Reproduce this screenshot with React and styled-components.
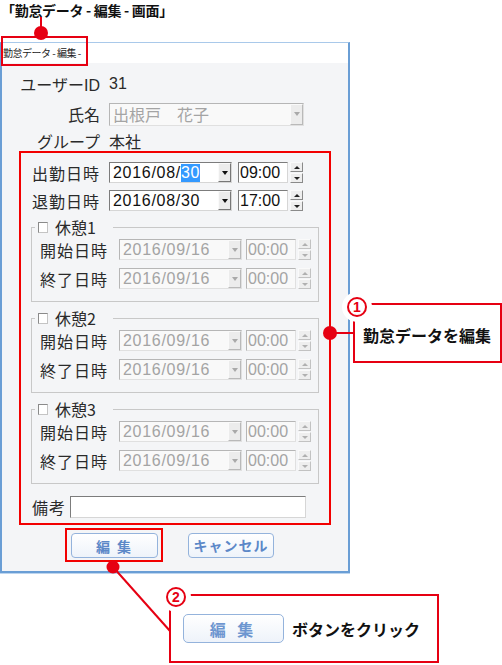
import React from 'react';
import styled, { createGlobalStyle } from 'styled-components';

const RED = '#e60012';
const BOX_RED = '#f20000';

const GlobalStyle = createGlobalStyle`
  html, body { margin: 0; padding: 0; background: #fff; }
  body {
    font-family: "Liberation Sans", "Noto Sans CJK JP", sans-serif;
    color: #222;
  }
`;

const Page = styled.div`
  position: relative;
  width: 502px;
  height: 665px;
  overflow: hidden;
  background: #fff;
`;

const Heading = styled.h1`
  margin: 0;
  padding-left: 1px;
  height: 20px;
  line-height: 20px;
  font-family: "Noto Sans CJK JP", sans-serif;
  font-size: 14px;
  font-weight: 700;
  letter-spacing: -0.3px;
  color: #111;
  white-space: nowrap;
`;

const Window = styled.div`
  margin-top: 22px;
  width: 346px;
  border: 2px solid #6a9ed5;
  border-top: 1px solid #a9c9ea;
  box-shadow: 0 1px 0 #bcd5ef;
`;

const TitleBar = styled.div`
  height: 20px;
  line-height: 20px;
  background: #fff;
  padding-left: 1px;
  font-family: "Noto Sans CJK JP", sans-serif;
  font-size: 10px;
  letter-spacing: -0.5px;
  color: #222;
  white-space: nowrap;
`;

const Body = styled.div`
  box-sizing: border-box;
  height: 508px;
  background: #f4f5f7;
  padding: 9px 0 0 17px;
  display: flex;
  flex-direction: column;
  align-items: flex-start;
`;

const InfoRow = styled.div`
  display: grid;
  grid-template-columns: 81px auto;
  column-gap: 9px;
  align-items: center;
  height: ${p => p.$h}px;
  margin-top: ${p => p.$mt || 0}px;
  font-size: 16px;
`;

const InfoLabel = styled.span`
  text-align: right;
  white-space: nowrap;
  color: #2a2a2a;
`;

const InfoValue = styled.span`
  white-space: nowrap;
  color: #2a2a2a;
`;

const Highlight = styled.section`
  box-sizing: border-box;
  width: 312px;
  margin-top: 2px;
  border: 2px solid ${BOX_RED};
  padding: 9px 0 5px 10px;
  display: flex;
  flex-direction: column;
  align-items: flex-start;
`;

const FormRow = styled.div`
  display: flex;
  align-items: center;
  height: ${p => p.$h || 21}px;
  margin-top: ${p => p.$mt || 0}px;
  padding-left: ${p => p.$pl ?? 1}px;
`;

const RowLabel = styled.span`
  width: ${p => p.$w}px;
  flex: none;
  font-family: "Noto Sans CJK JP", sans-serif;
  font-size: 16px;
  letter-spacing: 1px;
  color: #2a2a2a;
  white-space: nowrap;
`;

const Fields = styled.div`
  display: flex;
  align-items: center;
  gap: ${p => p.$gap}px;
`;

const Field = styled.div`
  display: flex;
  align-items: stretch;
  box-sizing: border-box;
  width: ${p => p.$w}px;
  height: ${p => p.$h || 21}px;
  border: 1px solid;
  border-color: ${p => (p.$disabled ? '#b6b6b6 #e0e0e0 #e0e0e0 #b6b6b6' : '#7c7c7c #d6d6d6 #d6d6d6 #7c7c7c')};
  background: ${p => (p.$disabled ? '#f9f9f9' : '#fff')};
  color: ${p => (p.$disabled ? '#a4a4a4' : '#111')};
  font-size: 16px;
  padding-left: ${p => p.$pl ?? 3}px;
  white-space: nowrap;
  overflow: hidden;
`;

const FieldText = styled.span`
  flex: 1;
  display: flex;
  align-items: center;
  letter-spacing: ${p => p.$ls || 0}px;
  font-family: ${p => (p.$cjk ? '"Noto Sans CJK JP", sans-serif' : '"Liberation Sans", sans-serif')};
`;

const Selected = styled.span`
  background: #3399ff;
  color: #fff;
`;

const DropButton = styled.span`
  flex: none;
  width: 13px;
  box-sizing: border-box;
  display: flex;
  align-items: center;
  justify-content: center;
  background: #ececec;
  border: 1px solid;
  border-color: ${p => (p.$disabled ? '#fafafa #b9b9b9 #b9b9b9 #fafafa' : '#fafafa #777 #777 #fafafa')};
  &::after {
    content: '';
    border-left: 3px solid transparent;
    border-right: 3px solid transparent;
    border-top: 4px solid ${p => (p.$disabled ? '#a9a9a9' : '#111')};
  }
`;

const TimeBox = styled.div`
  display: flex;
  align-items: center;
  gap: 2px;
`;

const Spinner = styled.div`
  display: flex;
  flex-direction: column;
  gap: 1px;
  width: 13px;
  height: 21px;
`;

const SpinButton = styled.span`
  flex: 1;
  box-sizing: border-box;
  display: flex;
  align-items: center;
  justify-content: center;
  background: #eeeeee;
  border: 1px solid;
  border-color: ${p => (p.$disabled ? '#fafafa #c2c2c2 #c2c2c2 #fafafa' : '#fafafa #8a8a8a #8a8a8a #fafafa')};
  &::after {
    content: '';
    border-left: 3px solid transparent;
    border-right: 3px solid transparent;
    ${p => (p.$up ? 'border-bottom' : 'border-top')}: 3px solid ${p => (p.$disabled ? '#b0b0b0' : '#222')};
  }
`;

const Group = styled.fieldset`
  box-sizing: border-box;
  width: 288px;
  min-width: 0;
  margin: ${p => p.$mt}px 0 0 0;
  padding: 3px 0 12px 8px;
  border: 1px solid #c8c8c8;
  display: flex;
  flex-direction: column;
`;

const Legend = styled.legend`
  display: flex;
  align-items: center;
  height: 18px;
  margin-left: -5px;
  padding: 0 17px 0 3px;
  font-family: "Noto Sans CJK JP", sans-serif;
  font-size: 16px;
  color: #2a2a2a;
`;

const CheckBox = styled.span`
  width: 10px;
  height: 11px;
  box-sizing: border-box;
  border: 1px solid;
  border-color: #8a8a8a #c4c4c4 #c4c4c4 #8a8a8a;
  background: #fff;
  margin-right: 7px;
`;

const ButtonRow = styled.div`
  display: flex;
  align-items: center;
  gap: 25px;
  margin-top: 3px;
  padding-left: 46px;
`;

const ButtonHighlight = styled.div`
  box-sizing: border-box;
  width: 98px;
  height: 34px;
  border: 2px solid ${BOX_RED};
  padding: 3px 0 0 4px;
`;

const FormButton = styled.button`
  box-sizing: border-box;
  width: ${p => p.$w}px;
  height: ${p => p.$h || 25}px;
  padding: 0;
  border: 1px solid #94b3dc;
  border-radius: ${p => p.$r || 4}px;
  background: linear-gradient(#ffffff, #eef3fa);
  color: ${p => p.$color || '#5c88c8'};
  font-family: "Noto Sans CJK JP", sans-serif;
  font-weight: 700;
  font-size: ${p => p.$fs || 14}px;
  letter-spacing: ${p => p.$ls || 1}px;
  white-space: pre;
  cursor: pointer;
`;

const Connectors = styled.svg`
  position: absolute;
  left: 0;
  top: 0;
  pointer-events: none;
`;

const TitleMark = styled.div`
  position: absolute;
  left: 1px;
  top: 36px;
  width: 87px;
  height: 30px;
  box-sizing: border-box;
  border: 2px solid ${RED};
`;

const Callout = styled.div`
  position: absolute;
  left: ${p => p.$x}px;
  top: ${p => p.$y}px;
  width: ${p => p.$w}px;
  height: ${p => p.$h}px;
  box-sizing: border-box;
  border: 2px solid ${RED};
  background: #fff;
  display: flex;
  align-items: center;
  gap: 8px;
  padding: ${p => p.$pad};
`;

const Badge = styled.span`
  position: absolute;
  left: ${p => p.$x}px;
  top: ${p => p.$y}px;
  width: 20px;
  height: 20px;
  box-sizing: border-box;
  border-radius: 50%;
  border: 2px solid ${RED};
  background: #fff;
  box-shadow: 0 0 0 5px #fff;
  color: ${RED};
  font-family: "Liberation Sans", sans-serif;
  font-weight: 700;
  font-size: 14px;
  line-height: 16px;
  text-align: center;
`;

const CalloutText = styled.span`
  font-family: "Noto Sans CJK JP", sans-serif;
  font-weight: 700;
  font-size: 16px;
  color: #111;
  white-space: nowrap;
`;

function DateCombo({ value, disabled, selected }) {
  return (
    <Field $w={123} $disabled={disabled}>
      <FieldText $ls={0.7}>
        {value}
        {selected && <Selected>{selected}</Selected>}
      </FieldText>
      <DropButton $disabled={disabled} />
    </Field>
  );
}

function TimeSpin({ value, disabled }) {
  return (
    <TimeBox>
      <Field $w={50} $pl={1} $disabled={disabled}>
        <FieldText>{value}</FieldText>
      </Field>
      <Spinner>
        <SpinButton $up $disabled={disabled} />
        <SpinButton $disabled={disabled} />
      </Spinner>
    </TimeBox>
  );
}

function DateTimeRow({ label, date, selected, time, disabled, labelW, gap, mt, pl }) {
  return (
    <FormRow $mt={mt} $pl={pl}>
      <RowLabel $w={labelW}>{label}</RowLabel>
      <Fields $gap={gap}>
        <DateCombo value={date} selected={selected} disabled={disabled} />
        <TimeSpin value={time} disabled={disabled} />
      </Fields>
    </FormRow>
  );
}

function BreakGroup({ n, mt }) {
  return (
    <Group $mt={mt}>
      <Legend>
        <CheckBox />
        休憩{n}
      </Legend>
      <DateTimeRow label="開始日時" date="2016/09/16" time="00:00" disabled labelW={79} gap={4} pl={0} />
      <DateTimeRow label="終了日時" date="2016/09/16" time="00:00" disabled labelW={79} gap={4} pl={0} mt={8} />
    </Group>
  );
}

export default function App() {
  return (
    <Page>
      <GlobalStyle />
      <Heading>「勤怠データ - 編集 - 画面」</Heading>
      <Window>
        <TitleBar>勤怠データ - 編集 -</TitleBar>
        <Body>
          <InfoRow $h={20}>
            <InfoLabel>ユーザーID</InfoLabel>
            <InfoValue>31</InfoValue>
          </InfoRow>
          <InfoRow $h={23} $mt={10}>
            <InfoLabel>氏名</InfoLabel>
            <Field $w={195} $h={23} $disabled>
              <FieldText $cjk>出根戸　花子</FieldText>
              <DropButton $disabled />
            </Field>
          </InfoRow>
          <InfoRow $h={20} $mt={4}>
            <InfoLabel>グループ</InfoLabel>
            <InfoValue>本社</InfoValue>
          </InfoRow>

          <Highlight>
            <DateTimeRow label="出勤日時" date="2016/08/" selected="30" time="09:00" labelW={77} gap={6} />
            <DateTimeRow label="退勤日時" date="2016/08/30" time="17:00" labelW={77} gap={6} mt={7} />
            <BreakGroup n={1} mt={7} />
            <BreakGroup n={2} mt={7} />
            <BreakGroup n={3} mt={7} />
            <FormRow $h={22} $mt={12}>
              <RowLabel $w={38}>備考</RowLabel>
              <Field $w={236} $h={22} />
            </FormRow>
          </Highlight>

          <ButtonRow>
            <ButtonHighlight>
              <FormButton $w={87} $ls={2}>編 集</FormButton>
            </ButtonHighlight>
            <FormButton $w={86}>キャンセル</FormButton>
          </ButtonRow>
        </Body>
      </Window>

      <TitleMark />

      <Connectors width="502" height="665" viewBox="0 0 502 665">
        <line x1="41" y1="17" x2="41" y2="33" stroke={RED} strokeWidth="2" />
        <circle cx="41" cy="33" r="7" fill={RED} />
        <line x1="330" y1="333" x2="354" y2="333" stroke={RED} strokeWidth="2" />
        <circle cx="330" cy="333" r="7" fill={RED} />
        <line x1="113" y1="567" x2="170" y2="631" stroke={RED} strokeWidth="2" />
        <circle cx="113" cy="567" r="6.5" fill={RED} />
      </Connectors>

      <Callout $x={353} $y={303} $w={149} $h={60} $pad="4px 0 0 8px">
        <Badge $x={-8} $y={-8}>1</Badge>
        <CalloutText>勤怠データを編集</CalloutText>
      </Callout>

      <Callout $x={169} $y={594} $w={270} $h={69} $pad="0 0 0 12px">
        <Badge $x={-5} $y={-9}>2</Badge>
        <FormButton $w={101} $h={29} $r={5} $fs={16} $ls={4} $color="#6d96d0">編 集</FormButton>
        <CalloutText>ボタンをクリック</CalloutText>
      </Callout>
    </Page>
  );
}
